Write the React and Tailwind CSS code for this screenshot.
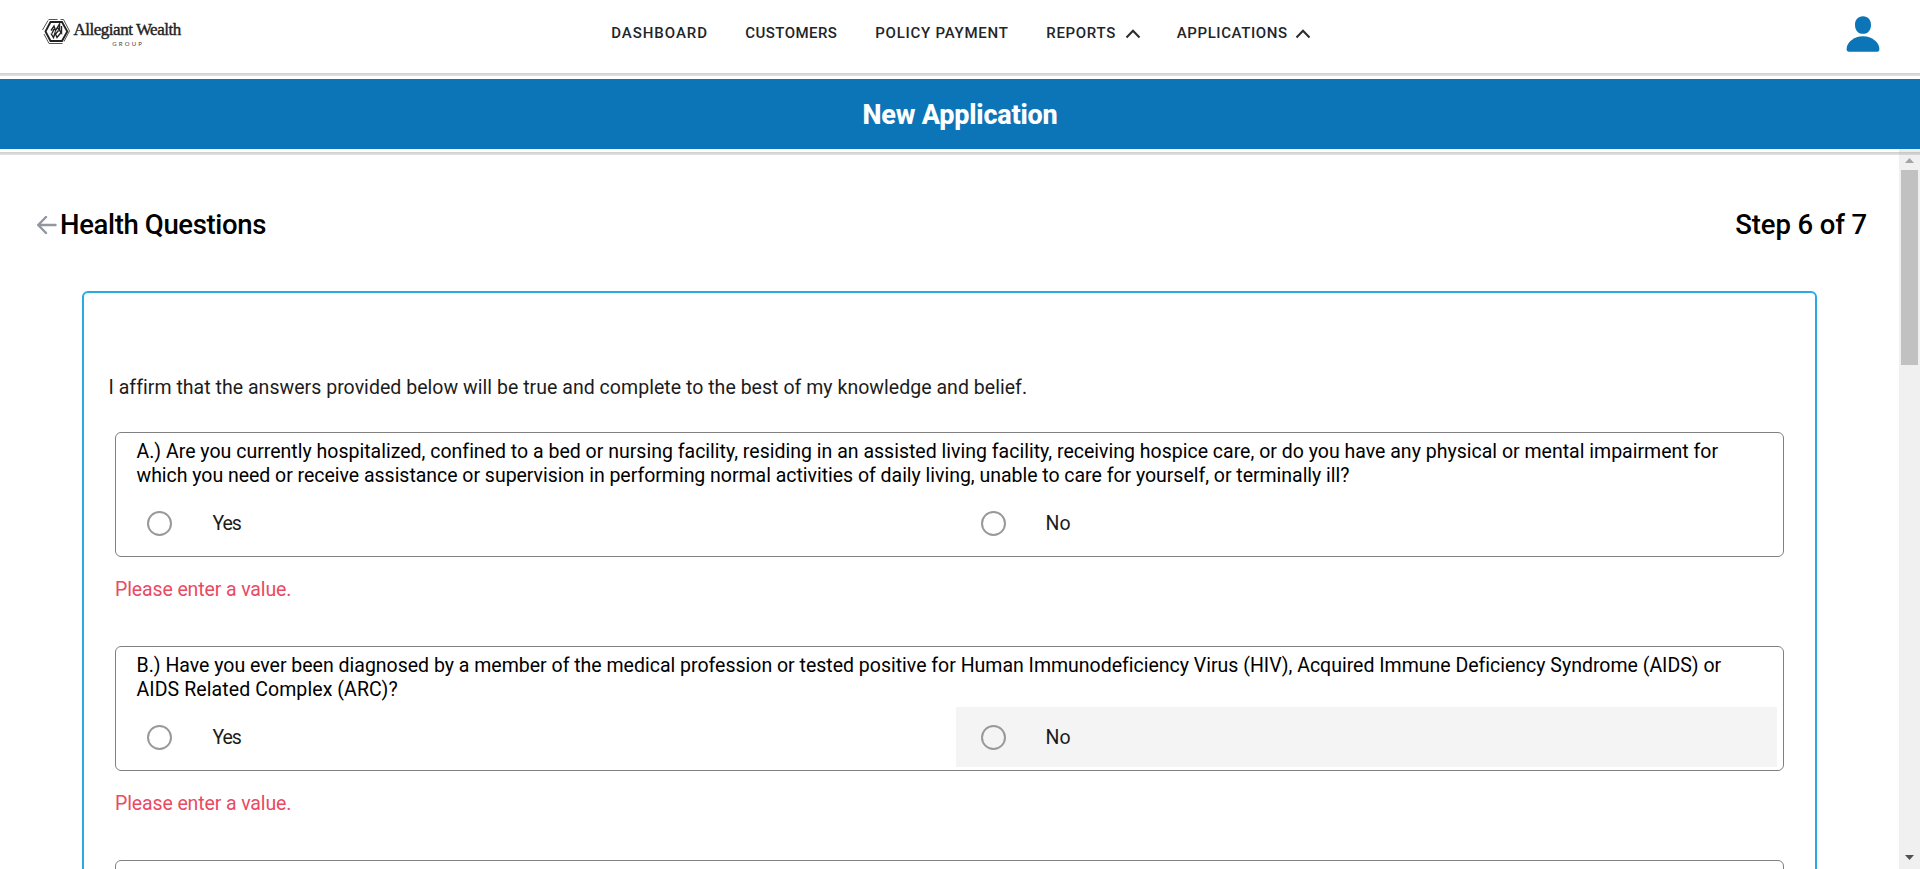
import React from "react";

const NAV = [
  { label: "DASHBOARD", cls: "w-[134px] tracking-[0.95px]" },
  { label: "CUSTOMERS", cls: "w-[130px] tracking-[0.45px]" },
  { label: "POLICY PAYMENT", cls: "w-[171px] tracking-[0.75px]" },
  { label: "REPORTS", cls: "w-[78.5px] tracking-[0.7px]", menu: true },
  { label: "APPLICATIONS", cls: "w-[118.5px] tracking-[0.6px]", menu: true },
];

const QUESTIONS = [
  {
    lines: [
      {
        text: "A.) Are you currently hospitalized, confined to a bed or nursing facility, residing in an assisted living facility, receiving hospice care, or do you have any physical or mental impairment for",
        cls: "tracking-[0.006px]",
      },
      {
        text: "which you need or receive assistance or supervision in performing normal activities of daily living, unable to care for yourself, or terminally ill?",
        cls: "tracking-[-0.025px]",
      },
    ],
    hovered: false,
  },
  {
    lines: [
      {
        text: "B.) Have you ever been diagnosed by a member of the medical profession or tested positive for Human Immunodeficiency Virus (HIV), Acquired Immune Deficiency Syndrome (AIDS) or",
        cls: "tracking-[-0.004px]",
      },
      { text: "AIDS Related Complex (ARC)?", cls: "tracking-[0.09px]" },
    ],
    hovered: true,
  },
];

function Logo() {
  return (
    <div className="flex w-[160px] items-start pt-[18px]">
      <svg width="30" height="27" viewBox="0 0 30 27" fill="none" stroke="#222">
        <path d="M8.5 4h11.500l5.300 9.500-5.300 9.500h-11.500L3.500 13.500z" strokeWidth="1.900" />
        <path d="M6.500 1.500h9M0.500 12L6 2.500M2 16l5 9.500M7 25.500h13.500M18.500 1.500h3L27.500 13l-5.500 10.500" strokeWidth="1" stroke="#555" />
        <path d="M9 12.500l3-4.500 1.500 4.500 4-6.500v6M15 9l4.500 6V8M9 15.500l2.500 4 1.500-4.500 2 4.500 4.500-5.500M12 11l-2 4.500M16.500 12.500l-3.500 4" strokeWidth="1.400" />
      </svg>
      <div className="flex flex-col items-center pl-[2px] pt-[3px]">
        <span className="whitespace-nowrap font-['Liberation_Serif',serif] text-[17px] leading-[18px] tracking-[-0.480px] text-[#222] [-webkit-text-stroke:0.4px_#222]">
          Allegiant Wealth
        </span>
        <span className="pt-[1px] pl-[2px] font-['Lato',sans-serif] text-[6px] leading-[7px] tracking-[2.200px] text-[#444]">GROUP</span>
      </div>
    </div>
  );
}

function Chevron() {
  return (
    <svg width="16" height="12" viewBox="0 0 16 12" fill="none" stroke="#2b2d30" strokeWidth="2" className="mt-[1px]">
      <path d="M1.500 9.500L8 2.700l6.500 6.800" />
    </svg>
  );
}

function Option({ label, cls, hovered }) {
  return (
    <label
      className={
        hovered
          ? "flex h-[60px] w-[821px] items-center bg-[#f4f4f4] pl-[25px]"
          : "flex h-[60px] w-[821px] items-center pl-[25px]"
      }
    >
      <span className="h-[25px] w-[25px] shrink-0 rounded-full border-2 border-[#999]" />
      <span className={cls}>{label}</span>
    </label>
  );
}

function Question({ lines, hovered }) {
  return (
    <div className="h-[214px]">
      <div className="flex h-[125px] flex-col rounded-[6px] border border-[#808080] pt-[7px]">
        <div className="h-[48px] pl-[20.500px] text-black">
          {lines.map((line) => (
            <p key={line.text} className="whitespace-nowrap">
              <span className={line.cls}>{line.text}</span>
            </p>
          ))}
        </div>
        <div className="mt-[5px] flex gap-[13px] pl-[6px] text-[#1c1c1c]">
          <Option label="Yes" cls="pt-[2px] pl-[40.500px] tracking-[-1.100px]" />
          <Option label="No" cls="pt-[2px] pl-[39.500px] tracking-[0.200px]" hovered={hovered} />
        </div>
      </div>
      <p className="mt-[21px] tracking-[-0.120px] text-[#ea4a62]">Please enter a value.</p>
    </div>
  );
}

function Divider() {
  return <div className="h-[3px] shrink-0 bg-linear-to-b from-[#cfcfcf] to-[#e3e3e3]" />;
}

export default function App() {
  return (
    <div className="flex h-[869px] w-[1920px] flex-col overflow-hidden bg-white font-['Roboto',sans-serif]">
      <header className="flex h-[73px] shrink-0 justify-between pl-[41.500px] pr-[40px]">
        <Logo />
        <nav className="flex h-[66px] items-center pl-px text-[15px] font-medium text-[#222529]">
          {NAV.map((item) => (
            <a key={item.label} className="flex items-center">
              <span className={"whitespace-nowrap " + item.cls}>{item.label}</span>
              {item.menu && (
                <span className={item.label === "REPORTS" ? "mr-[36px]" : ""}>
                  <Chevron />
                </span>
              )}
            </a>
          ))}
        </nav>
        <div className="flex w-[160px] justify-end pt-[16px]">
          <svg width="34" height="36" viewBox="0 0 34 36" fill="#0c75b8">
            <path d="M17 0.300c5.200 0 8 3.500 8 8.600s-2.900 8.900-8 8.900-8-3.800-8-8.900 2.800-8.600 8-8.600z" />
            <path d="M17 20.300c9 0 16.400 6.200 16.400 12.700 0 1.700-.8 2.700-2.400 2.700H3C1.400 35.700.6 34.700.6 33 .6 26.500 8 20.300 17 20.300z" />
          </svg>
        </div>
      </header>
      <Divider />
      <div className="mt-[3px] mb-[3px] flex h-[70px] shrink-0 items-center justify-center bg-[#0c75b8] pt-[2px] text-[27px] font-extrabold tracking-[-0.200px] text-white">
        New Application
      </div>
      <div className="flex min-h-0 flex-1">
        <div className="min-w-0 flex-1 overflow-hidden">
          <Divider />
          <div className="flex h-[136px] items-center justify-between pt-[3px] pr-[32px] pl-[37px] text-[27.500px] font-medium text-black">
            <h1 className="flex items-center tracking-[-0.360px]">
              <svg width="20" height="18" viewBox="0 0 20 18" fill="none" stroke="#92969f" strokeWidth="2.400" strokeLinecap="round" strokeLinejoin="round">
                <path d="M18.500 9H1.200M9 1L1.200 9L9 17" />
              </svg>
              <span className="pl-[3px]">Health Questions</span>
            </h1>
            <span className="tracking-[-0.120px]">Step 6 of 7</span>
          </div>
          <main className="ml-[82px] h-[700px] w-[1735px] rounded-[6px] border-2 border-[#29abe2] pt-[83px] text-[19.500px] leading-[24px]">
            <p className="pl-[24.500px] tracking-[0.035px] text-[#1c1c1c]">
              I affirm that the answers provided below will be true and complete to the best of my knowledge and belief.
            </p>
            <div className="mt-[32px] ml-[31px] w-[1669px]">
              {QUESTIONS.map((q) => (
                <Question key={q.lines[0].text} {...q} />
              ))}
              <div className="h-[125px] rounded-[6px] border border-[#808080]" />
            </div>
          </main>
        </div>
        <div className="-mt-[3px] flex w-[21px] shrink-0 flex-col items-center bg-[#f0f0f0]">
          <div className="h-[3px] w-full shrink-0 bg-[#ececec]" />
          <div className="h-[3px] w-full shrink-0 bg-linear-to-b from-[#c6c6c6] to-[#d8d8d8]" />
          <div className="flex h-[15px] shrink-0 items-start pt-[3px]">
            <svg width="9" height="5" viewBox="0 0 9 5" fill="#a3a3a3">
              <path d="M4.500 0L9 5H0z" />
            </svg>
          </div>
          <div className="mr-px h-[195px] w-[17px] shrink-0 bg-[#c1c1c1]" />
          <div className="flex flex-1 items-end pb-[9px]">
            <svg width="9" height="5" viewBox="0 0 9 5" fill="#505050">
              <path d="M0 0h9L4.500 5z" />
            </svg>
          </div>
        </div>
      </div>
    </div>
  );
}
